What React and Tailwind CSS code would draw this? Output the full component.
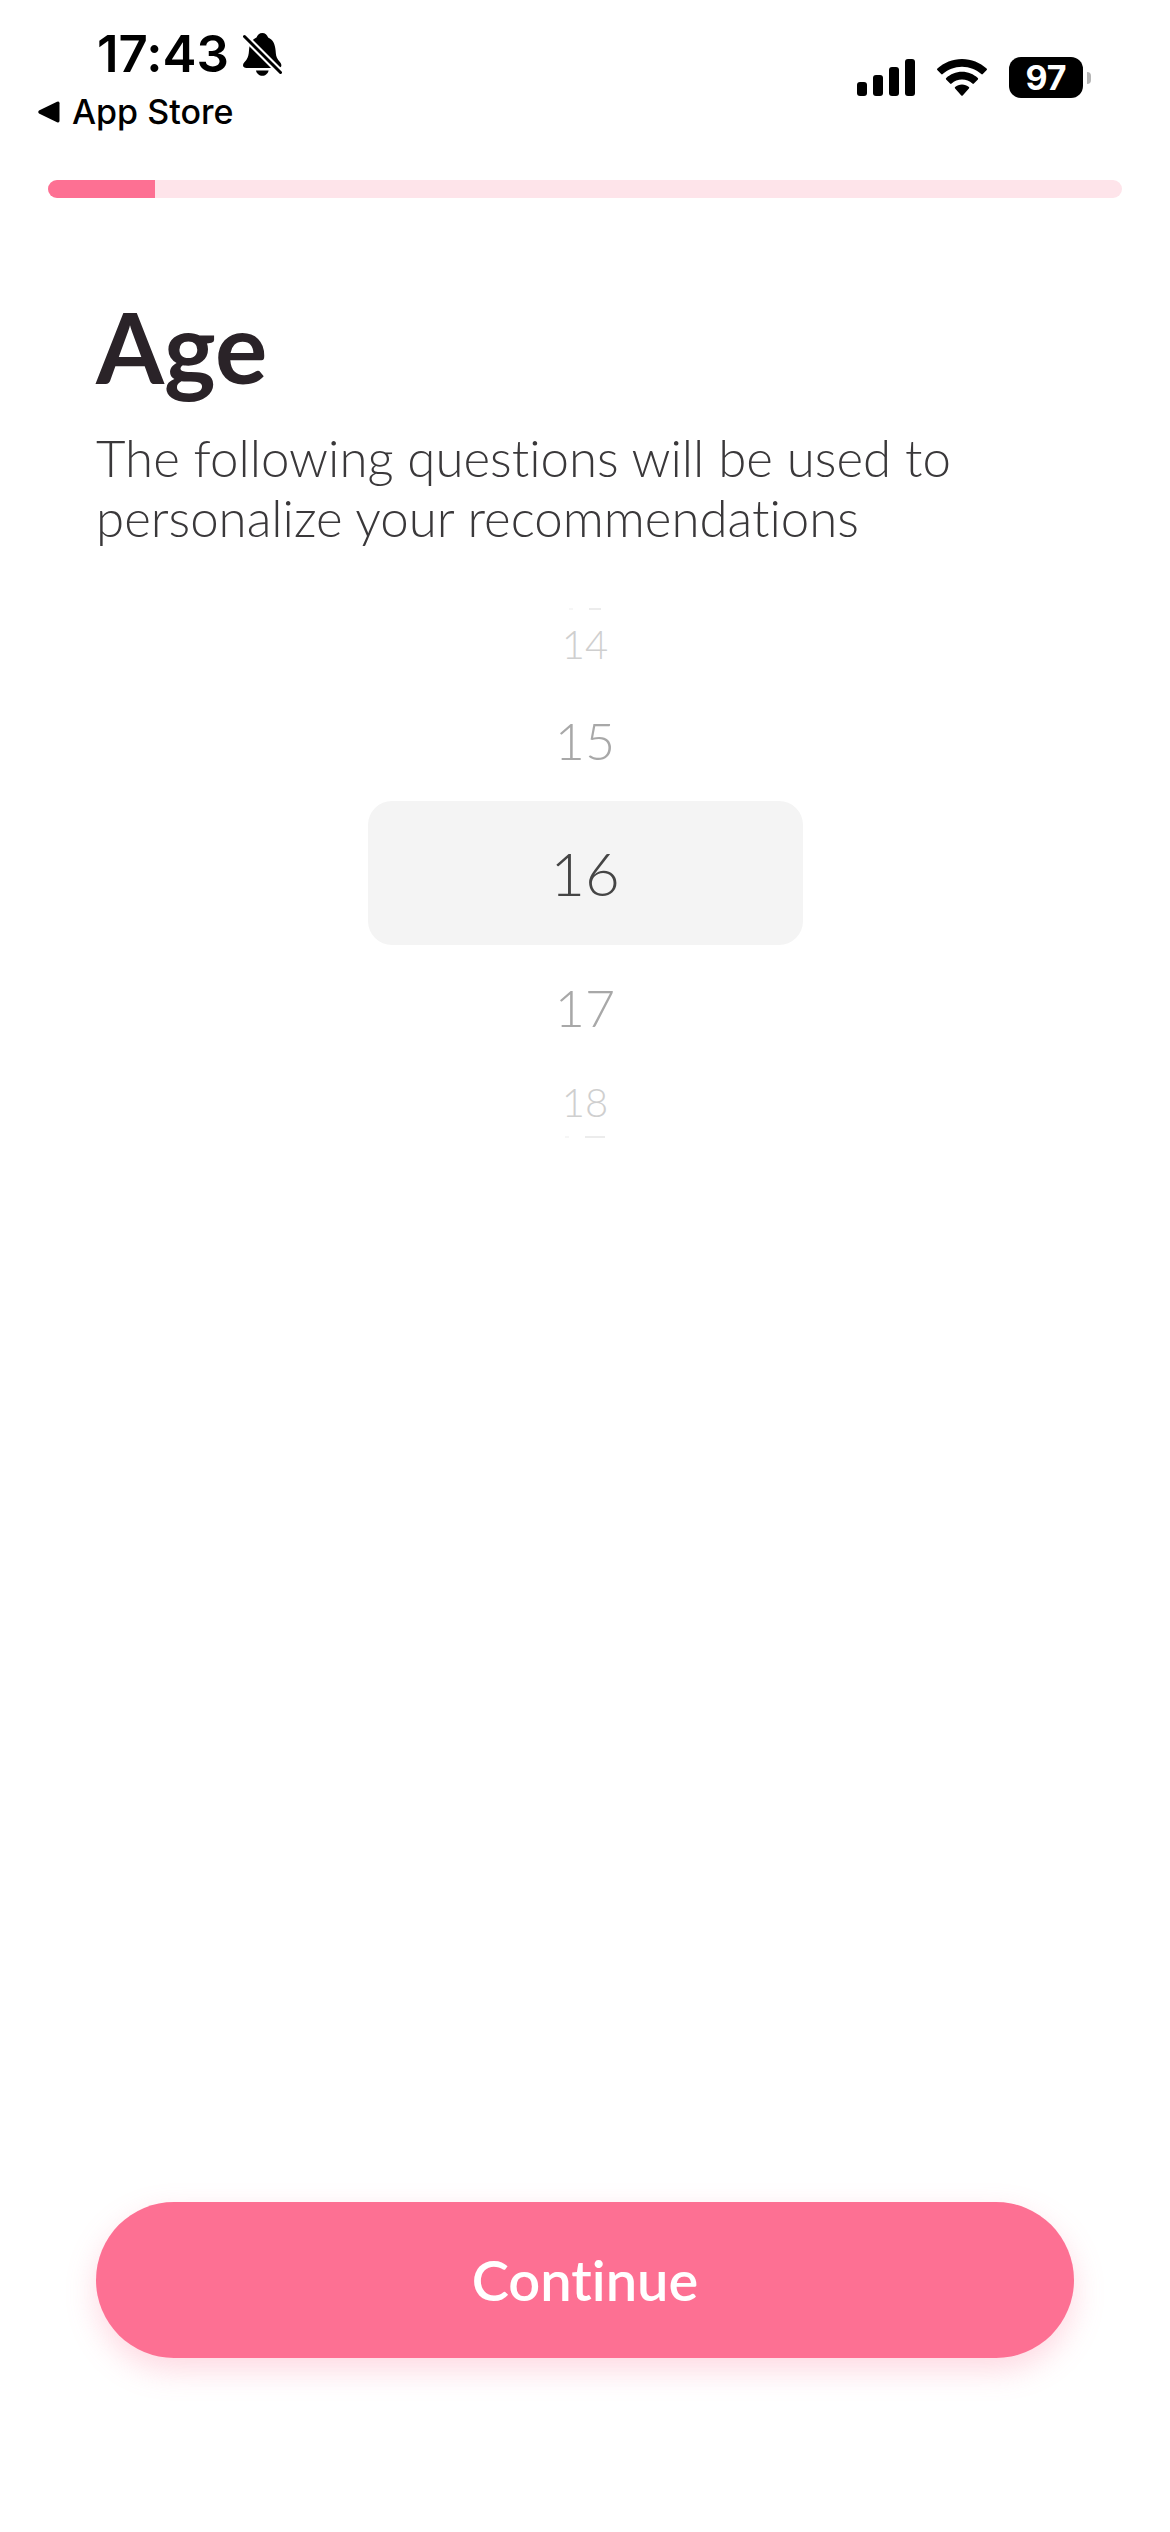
import { useState } from 'react';

const ages = [
    { value: 14, className: 'h-[68px] text-[40px] text-[#cfcfcf]' },
    { value: 15, className: 'h-[123px] text-[52px] text-[#a8a8a8]' },
    { value: 16, className: 'h-36 rounded-3xl bg-[#f4f4f4] text-[60px] text-[#454545]' },
    { value: 17, className: 'h-[123px] text-[52px] text-[#a8a8a8]' },
    { value: 18, className: 'h-[68px] text-[40px] text-[#cfcfcf]' },
];

function BellOffIcon() {
    return (
        <svg viewBox="0 0 39 43" className="h-[43px] w-[39px]" aria-hidden="true">
            <path
                d="M13.500 4.600C14.500 1.800 16.500 0 19.300 0s4.900 1.800 5.800 4.600C30 6.800 32 11 32.600 17.500c.3 4 .5 6.500 2.600 9.500 1.300 1.700 3.200 3 3.200 5.300 0 1.800-1.400 2.700-3.300 2.700H3.500C1.500 35 0 34 0 32.200c0-2.300 2-3.600 3.300-5.300C5.400 24 5.700 21.500 6 17.500c.5-6.500 2.600-10.700 7.500-12.900z"
            />
            <path d="M13 37.400h12.600c-.7 3.200-3.200 5.300-6.300 5.300s-5.600-2.100-6.300-5.300z" />
            <path d="M-2 0L39 41" stroke="#fff" strokeWidth="7" />
            <path d="M1.500 3.500L37.500 39.500" stroke="#000" strokeWidth="3" strokeLinecap="round" />
        </svg>
    );
}

function SignalIcon() {
    return (
        <svg viewBox="0 0 58 37" className="h-[37px] w-[58px]" aria-hidden="true">
            <rect x="0" y="23" width="10" height="14" rx="3" />
            <rect x="16" y="16" width="10" height="21" rx="3" />
            <rect x="32" y="8" width="10" height="29" rx="3" />
            <rect x="48" y="0" width="10" height="37" rx="3" />
        </svg>
    );
}

function WifiIcon() {
    return (
        <svg viewBox="0 0 50 37" className="h-[37px] w-[50px]" aria-hidden="true">
            <path d="M25 0c9.500 0 18 3.700 24.600 9.600.5.500.5 1 .1 1.500l-3.900 4c-.5.500-1 .5-1.500 0C39.200 10.500 32.500 7.700 25 7.700S10.800 10.500 5.700 15.100c-.5.500-1 .5-1.500 0l-3.900-4c-.4-.5-.4-1 .1-1.500C7 3.700 15.500 0 25 0z" />
            <path d="M25 12.800c6.100 0 11.600 2.400 15.800 6.200.5.500.5 1 .1 1.500l-4 4c-.5.500-1 .5-1.500.1-2.800-2.500-6.400-4-10.400-4s-7.600 1.500-10.400 4c-.5.400-1 .4-1.500-.1l-4-4c-.4-.5-.4-1 .1-1.500C13.400 15.200 18.900 12.800 25 12.800z" />
            <path d="M25 25.500c2.700 0 5 .9 6.900 2.500.5.500.5 1 0 1.500l-6.200 6.900c-.5.500-.9.500-1.400 0l-6.200-6.900c-.5-.5-.5-1 0-1.500 1.900-1.600 4.200-2.500 6.900-2.500z" />
        </svg>
    );
}

function StatusBar() {
    return (
        <header className="flex items-start justify-between pl-[38px] pr-[79px] pt-6 font-['Inter',sans-serif] text-black">
            <div>
                <div className="flex items-center gap-[14px] pl-[59px]">
                    <span className="text-[51px] font-semibold leading-[60px]">17:43</span>
                    <BellOffIcon />
                </div>
                <a href="#" className="mt-2 flex items-center gap-3 text-[34px] font-medium leading-10">
                    <svg viewBox="0 0 22 22" className="h-[22px] w-[22px]" aria-hidden="true">
                        <path d="M1 9.500L19 .7q2.500-1 2.500 1.500v17.600q0 2.500-2.500 1.500L1 12.500q-1.500-1.500 0-3z" />
                    </svg>
                    App Store
                </a>
            </div>
            <div className="flex items-center gap-[22px] pt-[33px]">
                <SignalIcon />
                <WifiIcon />
                <div className="flex items-center gap-1">
                    <div className="flex h-[41px] w-[74px] items-center justify-center rounded-xl bg-black text-[34px] font-bold leading-none text-white">
                        97
                    </div>
                    <div className="h-3 w-1 rounded-r-full bg-[#b5b5b5]" />
                </div>
            </div>
        </header>
    );
}

export default function App() {
    const [age, setAge] = useState(16);

    return (
        <div className="flex min-h-screen flex-col bg-white font-['Lato',sans-serif] [font-variant-ligatures:none]">
            <StatusBar />

            {/* Onboarding progress */}
            <div className="mx-12 mt-12 h-[18px] overflow-hidden rounded-full bg-[#fee4ea]">
                <div className="h-full w-1/10 bg-[#fd7093]" />
            </div>

            <main className="flex flex-1 flex-col px-24 pb-[174px]">
                <h1 id="age-title" className="mt-[88px] text-[98px] font-bold leading-[120px] text-[#2a2328]">
                    Age
                </h1>
                <p className="mt-[22px] text-[51px] font-light leading-[60px] text-[#3a383a]">
                    The following questions will be used to personalize your recommendations
                </p>

                {/* Age wheel */}
                <fieldset
                    aria-labelledby="age-title"
                    className="mx-auto mt-[60px] flex w-[435px] flex-col items-center font-light"
                >
                    <div className="flex gap-4">
                        <div className="h-0.5 w-1 bg-[#f6f6f6]" />
                        <div className="h-0.5 w-3 bg-[#ececec]" />
                    </div>
                    {ages.map(item => (
                        <label
                            key={item.value}
                            className={`flex w-full items-center justify-center leading-none ${item.className}`}
                        >
                            <input
                                type="radio"
                                name="age"
                                className="sr-only"
                                value={item.value}
                                checked={age === item.value}
                                onChange={() => setAge(item.value)}
                            />
                            {item.value}
                        </label>
                    ))}
                    <div className="flex gap-4">
                        <div className="h-0.5 w-1 bg-[#f6f6f6]" />
                        <div className="h-0.5 w-5 bg-[#ececec]" />
                    </div>
                </fieldset>

                <button
                    type="button"
                    className="mt-auto h-[156px] w-full rounded-full bg-[#fd7093] text-[56px] font-semibold text-white shadow-[0_12px_30px_#fd709344]"
                >
                    Continue
                </button>
            </main>
        </div>
    );
}
